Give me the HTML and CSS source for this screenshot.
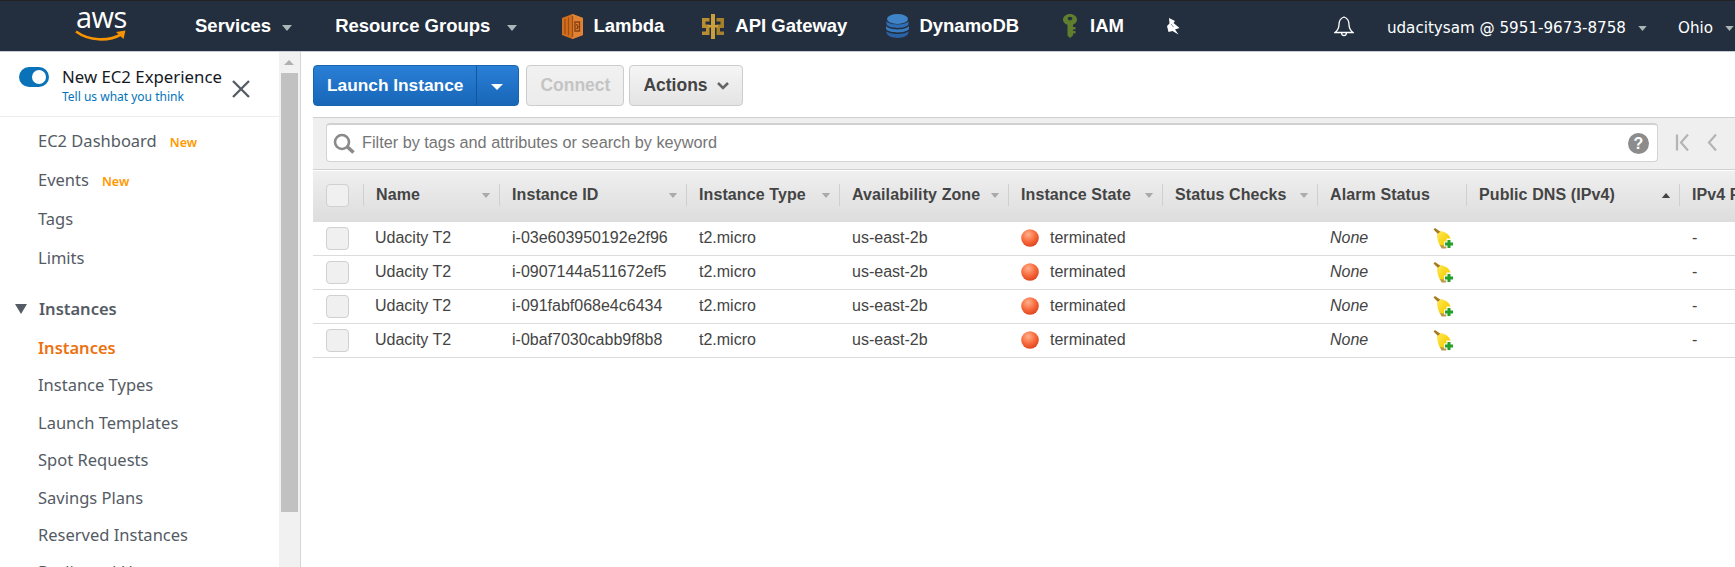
FILE: index.html
```html
<!DOCTYPE html>
<html lang="en">
<head>
    <meta charset="UTF-8">
    <title>Instances | EC2 Management Console</title>
    <link rel="stylesheet" href="styles.css">
</head>
<body>
    <svg class="defs" width="0" height="0">
        <defs>
            <radialGradient id="redBall" cx="0.4" cy="0.3" r="0.75">
                <stop offset="0" stop-color="#ffb08c"/>
                <stop offset="0.55" stop-color="#f86a3c"/>
                <stop offset="1" stop-color="#d9401c"/>
            </radialGradient>
            <linearGradient id="broomHead" x1="0" y1="0" x2="1" y2="1">
                <stop offset="0" stop-color="#ffe95a"/>
                <stop offset="0.6" stop-color="#f7d20f"/>
                <stop offset="1" stop-color="#e0ac08"/>
            </linearGradient>
            <symbol id="ball" viewBox="0 0 18 18">
                <circle cx="9" cy="9" r="8.800" fill="url(#redBall)"/>
            </symbol>
            <symbol id="broom" viewBox="0 0 21 21">
                <path d="M0.500 1.500 L2 0 L8.500 4.500 L6 7 Z" fill="#a8791a"/>
                <path d="M4 6.500 L8 3 C13 4 17 7 18 12 L15 19 L10 20 L7 18 C5 14 4 10 4 6.500 Z" fill="url(#broomHead)"/>
                <path d="M7 17 L8.500 20.500 L13 20.500 L14 18 Z" fill="#b79a4c"/>
                <path d="M13.500 10.500 h5 v3 h2.500 v5 h-2.500 v2.500 h-5 v-2.500 h-2.500 v-5 h2.500 Z" fill="#ffffff"/>
                <path d="M14.500 12 h3 v2.500 h2.500 v3 h-2.500 v2.500 h-3 v-2.500 h-2.500 v-3 h2.500 Z" fill="#22a028"/>
            </symbol>
            <symbol id="caret" viewBox="0 0 10 6">
                <path d="M0 0 H10 L5 6 Z" fill="currentColor"/>
            </symbol>
        </defs>
    </svg>

    <header class="topbar">
        <div class="logo">
            <span class="logo-text">aws</span>
            <svg class="logo-smile" viewBox="0 0 51 12" width="51" height="12">
                <path d="M1 1.500 C14 11 33 12 47 4" fill="none" stroke="#f79400" stroke-width="2.600"/>
                <path d="M41 2 L50.500 0.500 L48.500 9 Z" fill="#f79400"/>
            </svg>
        </div>
        <nav class="nav-main">
            <a class="nav-menu nav-services">Services<svg class="nav-caret"><use href="#caret"/></svg></a>
            <a class="nav-menu nav-groups">Resource Groups<svg class="nav-caret"><use href="#caret"/></svg></a>
            <a class="nav-link nav-lambda">
                <svg width="21" height="25" viewBox="0 0 21 25">
                    <path d="M10.500 0 L21 4 V21 L10.500 25 L0 21 V4 Z" fill="#d0701f"/>
                    <path d="M10.500 0 L21 4 V21 L10.500 25 Z" fill="#e08336"/>
                    <path d="M3 5 V20 M6.500 3.500 V21.500 M10.500 2 V23" stroke="#a04c12" stroke-width="1.300"/>
                    <path d="M13 8 H17.500 V17 H13 Z M14.500 10 L16 13 L14.500 15" fill="none" stroke="#8a3f0e" stroke-width="1.400"/>
                </svg>
                <span>Lambda</span>
            </a>
            <a class="nav-link nav-api">
                <svg width="22" height="25" viewBox="0 0 22 25">
                    <path d="M0 4 H7.500 V7.500 H3.500 V10.500 H7.500 V21 H0 V17.500 H4 V14 H0 Z" fill="#b98d32"/>
                    <path d="M22 4 H14.500 V7.500 H18.500 V10.500 H14.500 V21 H22 V17.500 H18 V14 H22 Z" fill="#a87f2a"/>
                    <path d="M9 0 H13 V25 H9 Z M6 11 H16 V13.500 H6 Z" fill="#c9a03c"/>
                </svg>
                <span>API Gateway</span>
            </a>
            <a class="nav-link nav-dynamo">
                <svg width="23" height="24" viewBox="0 0 23 24">
                    <ellipse cx="11.500" cy="5" rx="10.500" ry="5" fill="#3f84c8"/>
                    <path d="M0.500 7 C3 11.500 20 11.500 22.500 7 V10.500 C20 15 3 15 0.500 10.500 Z" fill="#2f6db4"/>
                    <path d="M0 12 C3 16.500 20 16.500 23 12 V15 C20 19.500 3 19.500 0 15 Z" fill="#3a7cc2"/>
                    <path d="M0.500 17 C3 21 20 21 22.500 17 V19 C20 25.500 3 25.500 0.500 19 Z" fill="#2a62a6"/>
                </svg>
                <span>DynamoDB</span>
            </a>
            <a class="nav-link nav-iam">
                <svg width="14" height="24" viewBox="0 0 14 24">
                    <path fill-rule="evenodd" d="M7 0 C10.800 0 14 2.500 14 5.800 C14 8 12.500 9.800 10 10.800 V13 H12.500 V15.500 H10 V17 H12.500 V19.500 H10 V21.500 L7 24 L4.500 21.500 V10.800 C1.800 10 0 8 0 5.800 C0 2.500 3.200 0 7 0 Z M7 2.800 C5.800 2.800 4.700 3.500 4.700 4.600 C4.700 5.700 5.800 6.400 7 6.400 C8.200 6.400 9.300 5.700 9.300 4.600 C9.300 3.500 8.200 2.800 7 2.800 Z" fill="#5f7f2e"/>
                </svg>
                <span>IAM</span>
            </a>
            <a class="nav-pin">
                <svg width="15" height="17" viewBox="0 0 15 17">
                    <path d="M4 0 L10 3 L8.500 5 L14.500 10 L10 11.500 L13.500 16.500 L7.500 13 L3.500 14 L2 8 L4.500 5.500 Z" fill="#ffffff"/>
                    <path d="M6 6 L8.500 9" stroke="#8d949c" stroke-width="1"/>
                </svg>
            </a>
        </nav>
        <div class="nav-right">
            <svg class="bell" width="20" height="21" viewBox="0 0 20 21">
                <path d="M10 1 C6 2.500 5 5.500 5 8.500 C5 12.500 3.500 14.500 1 16.500 H19 C16.500 14.500 15 12.500 15 8.500 C15 5.500 14 2.500 10 1 Z M7.500 17 C8 20.500 12 20.500 12.500 17" fill="none" stroke="#ffffff" stroke-width="1.300"/>
            </svg>
            <span class="account">udacitysam @ 5951-9673-8758<svg class="acct-caret"><use href="#caret"/></svg></span>
            <span class="account region">Ohio<svg class="acct-caret"><use href="#caret"/></svg></span>
        </div>
    </header>

    <div class="page">
        <aside class="sidebar">
            <div class="side-content">
                <div class="experience">
                    <span class="toggle"><span class="toggle-knob"></span></span>
                    <div class="exp-text">
                        <div class="exp-title">New EC2 Experience</div>
                        <a class="exp-link">Tell us what you think</a>
                    </div>
                    <svg class="exp-close" width="18" height="18" viewBox="0 0 18 18">
                        <path d="M1 1 L17 17 M17 1 L1 17" stroke="#545b64" stroke-width="2.300"/>
                    </svg>
                </div>
                <ul class="side-list">
                    <li>EC2 Dashboard<span class="badge">New</span></li>
                    <li>Events<span class="badge">New</span></li>
                    <li>Tags</li>
                    <li>Limits</li>
                </ul>
                <div class="side-group"><span class="group-arrow"></span>Instances</div>
                <ul class="side-list side-list-tight">
                    <li class="active">Instances</li>
                    <li>Instance Types</li>
                    <li>Launch Templates</li>
                    <li>Spot Requests</li>
                    <li>Savings Plans</li>
                    <li>Reserved Instances</li>
                    <li>Dedicated Hosts</li>
                </ul>
            </div>
            <div class="scrollbar">
                <div class="scroll-up"></div>
                <div class="scroll-thumb"></div>
            </div>
        </aside>

        <main class="main">
            <div class="toolbar">
                <div class="btn-launch">
                    <span class="launch-label">Launch Instance</span>
                    <span class="launch-drop"></span>
                </div>
                <button class="btn btn-disabled">Connect</button>
                <button class="btn btn-actions">Actions<svg width="12" height="8" viewBox="0 0 12 8"><path d="M1 1 L6 6 L11 1" fill="none" stroke="#666" stroke-width="2.600"/></svg></button>
            </div>

            <div class="filter-band">
                <div class="search">
                    <svg class="search-icon" width="22" height="21" viewBox="0 0 22 21">
                        <circle cx="9" cy="9" r="7" fill="none" stroke="#8a8a8a" stroke-width="2.600"/>
                        <path d="M14.500 14 L20.500 19.500" stroke="#8a8a8a" stroke-width="3.600"/>
                    </svg>
                    <span class="search-text">Filter by tags and attributes or search by keyword</span>
                    <span class="help">?</span>
                </div>
                <div class="pager">
                    <svg width="15" height="17" viewBox="0 0 15 17"><path d="M2 0.500 V16.500 M13 0.500 L6 8.500 L13 16.500" fill="none" stroke="#b4b4b4" stroke-width="2.200"/></svg>
                    <svg width="10" height="17" viewBox="0 0 10 17"><path d="M9 0.500 L2 8.500 L9 16.500" fill="none" stroke="#b4b4b4" stroke-width="2.200"/></svg>
                </div>
            </div>

            <table class="grid">
                <colgroup>
                    <col class="c-check"><col class="c-name"><col class="c-id"><col class="c-type"><col class="c-zone">
                    <col class="c-state"><col class="c-checks"><col class="c-alarm"><col class="c-dns"><col class="c-ip">
                </colgroup>
                <thead>
                    <tr>
                        <th><span class="check"></span></th>
                        <th><div class="th-in">Name<svg class="sort"><use href="#caret"/></svg></div></th>
                        <th><div class="th-in">Instance ID<svg class="sort"><use href="#caret"/></svg></div></th>
                        <th><div class="th-in">Instance Type<svg class="sort"><use href="#caret"/></svg></div></th>
                        <th><div class="th-in">Availability Zone<svg class="sort"><use href="#caret"/></svg></div></th>
                        <th><div class="th-in">Instance State<svg class="sort"><use href="#caret"/></svg></div></th>
                        <th><div class="th-in">Status Checks<svg class="sort"><use href="#caret"/></svg></div></th>
                        <th><div class="th-in">Alarm Status</div></th>
                        <th><div class="th-in">Public DNS (IPv4)<svg class="sort sort-up"><use href="#caret"/></svg></div></th>
                        <th><div class="th-in">IPv4 Public IP</div></th>
                    </tr>
                </thead>
                <tbody>
                    <tr>
                        <td><span class="check"></span></td><td>Udacity T2</td><td>i-03e603950192e2f96</td><td>t2.micro</td><td>us-east-2b</td>
                        <td><div class="state"><svg width="18" height="18"><use href="#ball"/></svg>terminated</div></td><td></td>
                        <td><div class="alarm"><em>None</em><svg width="21" height="21"><use href="#broom"/></svg></div></td><td></td><td>-</td>
                    </tr>
                    <tr>
                        <td><span class="check"></span></td><td>Udacity T2</td><td>i-0907144a511672ef5</td><td>t2.micro</td><td>us-east-2b</td>
                        <td><div class="state"><svg width="18" height="18"><use href="#ball"/></svg>terminated</div></td><td></td>
                        <td><div class="alarm"><em>None</em><svg width="21" height="21"><use href="#broom"/></svg></div></td><td></td><td>-</td>
                    </tr>
                    <tr>
                        <td><span class="check"></span></td><td>Udacity T2</td><td>i-091fabf068e4c6434</td><td>t2.micro</td><td>us-east-2b</td>
                        <td><div class="state"><svg width="18" height="18"><use href="#ball"/></svg>terminated</div></td><td></td>
                        <td><div class="alarm"><em>None</em><svg width="21" height="21"><use href="#broom"/></svg></div></td><td></td><td>-</td>
                    </tr>
                    <tr>
                        <td><span class="check"></span></td><td>Udacity T2</td><td>i-0baf7030cabb9f8b8</td><td>t2.micro</td><td>us-east-2b</td>
                        <td><div class="state"><svg width="18" height="18"><use href="#ball"/></svg>terminated</div></td><td></td>
                        <td><div class="alarm"><em>None</em><svg width="21" height="21"><use href="#broom"/></svg></div></td><td></td><td>-</td>
                    </tr>
                </tbody>
            </table>
        </main>
    </div>
</body>
</html>
```

FILE: styles.css
```css
/* Page */
html, body {
    margin: 0;
    padding: 0;
    height: 100%;
    overflow: hidden;
}
body {
    display: flex;
    flex-direction: column;
    font-family: "Liberation Sans", Arial, sans-serif;
    color: #444;
    background: #fff;
}
.defs {
    position: absolute;
}

/* Top bar */
.topbar {
    flex: none;
    height: 50px;
    display: flex;
    align-items: center;
    background: #232f3e;
    border-top: 1px solid #222;
    border-bottom: 1px solid #c6ccd2;
    color: #fff;
}
.logo {
    width: 195px;
    height: 50px;
    flex: none;
    padding-left: 76px;
    box-sizing: border-box;
    position: relative;
}
.logo-text {
    display: block;
    padding-top: 1px;
    font-family: "Open Sans", sans-serif;
    font-size: 29px;
    line-height: 30px;
    letter-spacing: -0.5px;
}
.logo-smile {
    position: absolute;
    left: 75px;
    top: 29px;
}
.nav-main {
    display: flex;
    align-items: center;
    font-size: 18.500px;
    font-weight: bold;
    height: 100%;
}
.nav-main a {
    display: flex;
    align-items: center;
}
.nav-caret {
    width: 10px;
    height: 6px;
    margin-top: 3px;
    color: #aab7b8;
    flex: none;
}
.nav-services .nav-caret { margin-left: 11px; }
.nav-services { margin-right: 43px; }
.nav-groups .nav-caret { margin-left: 17px; }
.nav-groups { margin-right: 45px; }
.nav-lambda { margin-right: 38px; }
.nav-lambda svg { margin-right: 10px; }
.nav-api { margin-right: 39px; }
.nav-api svg { margin-right: 11px; }
.nav-dynamo { margin-right: 44px; }
.nav-dynamo svg { margin-right: 10px; }
.nav-iam { margin-right: 41px; }
.nav-iam svg { margin-right: 13px; }
.nav-right {
    margin-left: auto;
    padding-right: 1px;
    display: flex;
    align-items: center;
    font-family: "DejaVu Sans", sans-serif;
    font-size: 15.150px;
}
.bell {
    margin-right: 33px;
}
.account {
    display: flex;
    align-items: center;
    white-space: nowrap;
    margin-top: 4px;
}
.region {
    margin-left: 31px;
}
.acct-caret {
    width: 9px;
    height: 5px;
    margin-left: 12px;
    color: #aab7b8;
    flex: none;
}

/* Layout */
.page {
    flex: 1;
    display: flex;
    min-height: 0;
}
.sidebar {
    flex: none;
    width: 300px;
    display: flex;
    border-right: 1px solid #d5d5d5;
    overflow: hidden;
}
.side-content {
    flex: 1;
    min-width: 0;
    font-family: "Noto Sans", "Open Sans", sans-serif;
    color: #545b64;
}
.scrollbar {
    flex: none;
    width: 21px;
    background: #f1f1f1;
    box-sizing: border-box;
    padding: 0 2px;
}
.scroll-up {
    height: 21px;
    position: relative;
}
.scroll-up::after {
    content: "";
    position: absolute;
    left: 3px;
    top: 8px;
    border-left: 5px solid transparent;
    border-right: 5px solid transparent;
    border-bottom: 5px solid #b0b0b0;
}
.scroll-thumb {
    height: 439px;
    background: #c1c1c1;
}

/* New EC2 Experience box */
.experience {
    height: 65px;
    display: flex;
    padding-top: 14px;
    padding-left: 19px;
    box-sizing: border-box;
    border-bottom: 1px solid #eaeded;
}
.toggle {
    width: 30px;
    height: 20px;
    border-radius: 10px;
    background: #0a72b8;
    flex: none;
    position: relative;
    margin-top: 1px;
}
.toggle-knob {
    position: absolute;
    right: 3px;
    top: 3px;
    width: 14px;
    height: 14px;
    background: #fff;
    border-radius: 50%;
}
.exp-text {
    margin-left: 13px;
    flex: none;
}
.exp-title {
    font-size: 16.800px;
    line-height: 22px;
    color: #16191f;
}
.exp-link {
    display: block;
    font-size: 12px;
    line-height: 18px;
    color: #0073bb;
}
.exp-close {
    margin-left: 10px;
    margin-top: 14px;
    flex: none;
}

/* Navigation list */
.side-list {
    list-style: none;
    margin: 0;
    padding: 4px 0 0 38px;
    font-size: 16.500px;
}
.side-list li {
    height: 39px;
    line-height: 39px;
    white-space: nowrap;
}
.side-list-tight {
    padding-top: 1.500px;
}
.side-list-tight li {
    height: 37.400px;
    line-height: 37.400px;
}
.badge {
    font-size: 12.500px;
    font-weight: 600;
    color: #ff9900;
    margin-left: 13px;
}
.side-group {
    margin-top: 12.500px;
    height: 38px;
    font-size: 16.500px;
    font-weight: 600;
    display: flex;
    align-items: center;
    padding-left: 15px;
}
.group-arrow {
    width: 0;
    height: 0;
    border-left: 6px solid transparent;
    border-right: 6px solid transparent;
    border-top: 10px solid #545b64;
    margin-right: 12px;
}
.side-list .active {
    color: #ec7211;
    font-weight: 600;
}

/* Toolbar */
.main {
    flex: 1;
    min-width: 0;
    overflow: hidden;
    padding-left: 12px;
}
.toolbar {
    display: flex;
    padding-top: 13px;
}
.btn-launch {
    display: flex;
    height: 41px;
    box-sizing: border-box;
    border: 1px solid #1a63ae;
    border-radius: 4px;
    background: linear-gradient(#2a7fd6, #1766b8);
    color: #fff;
    font-weight: bold;
    font-size: 17.300px;
}
.launch-label {
    padding: 0 13px;
    line-height: 39px;
    border-right: 1px solid #1455a0;
    white-space: nowrap;
}
.launch-drop {
    width: 41px;
    position: relative;
}
.launch-drop::after {
    content: "";
    position: absolute;
    left: 14px;
    top: 18px;
    border-left: 6px solid transparent;
    border-right: 6px solid transparent;
    border-top: 6px solid #fff;
}
.btn {
    height: 41px;
    padding: 0 13px;
    border: 1px solid #ccc;
    border-radius: 4px;
    font-family: inherit;
    font-weight: bold;
    font-size: 17.500px;
    background: linear-gradient(#f5f5f5, #e4e4e4);
}
.btn-disabled {
    margin-left: 7px;
    color: #c4c4c4;
    background: linear-gradient(#f1f1f1, #ececec);
}
.btn-actions {
    margin-left: 5px;
    color: #444;
    display: flex;
    align-items: center;
}
.btn-actions svg {
    margin-left: 9px;
}

/* Search band */
.filter-band {
    margin-top: 11px;
    height: 53px;
    box-sizing: border-box;
    display: flex;
    background: #efefef;
    border-top: 1px solid #d0d0d0;
    border-bottom: 1px solid #d0d0d0;
    padding: 5px 0 0 13px;
}
.search {
    width: 1332px;
    height: 39px;
    flex: none;
    box-sizing: border-box;
    background: #fff;
    border: 1px solid #d4d4d4;
    border-top: 2px solid #d0d0d0;
    border-radius: 4px;
    display: flex;
    align-items: center;
    padding: 0 8px 0 6px;
}
.search-icon {
    flex: none;
}
.search-text {
    margin-left: 7px;
    margin-bottom: 2px;
    color: #757575;
    font-size: 16.250px;
    flex: 1;
}
.help {
    width: 21px;
    height: 21px;
    border-radius: 50%;
    background: #8c8c8c;
    color: #fff;
    font-size: 16px;
    font-weight: bold;
    text-align: center;
    line-height: 21px;
}
.pager {
    height: 39px;
    display: flex;
    align-items: center;
    gap: 17px;
    margin-left: 17px;
    flex: none;
}

/* Instances grid */
.grid {
    border-collapse: separate;
    border-spacing: 0;
    table-layout: fixed;
    width: 1564px;
    margin-top: 1px;
    font-size: 16px;
}
.c-check { width: 50px; }
.c-name { width: 136px; }
.c-id { width: 187px; }
.c-type { width: 153px; }
.c-zone { width: 169px; }
.c-state { width: 154px; }
.c-checks { width: 155px; }
.c-alarm { width: 149px; }
.c-dns { width: 213px; }
.c-ip { width: 198px; }
.grid th {
    height: 48px;
    padding: 0 0 3px;
    text-align: left;
    background: linear-gradient(#efefef, #dddddd);
    font-weight: bold;
    white-space: nowrap;
}
.th-in {
    display: flex;
    align-items: center;
    height: 22px;
    padding: 0 8px 0 12px;
    border-left: 1px solid #cfcfcf;
    letter-spacing: 0.1px;
}
.sort {
    width: 10px;
    height: 5px;
    margin-left: auto;
    color: #aaa;
    flex: none;
}
.sort-up {
    color: #444;
    transform: rotate(180deg);
}
.grid td {
    height: 32px;
    padding: 0 0 1px 13px;
    color: #444;
    border-bottom: 1px solid #dcdcdc;
    white-space: nowrap;
    overflow: hidden;
}
.grid td:nth-child(2) {
    padding-left: 12px;
}
.grid th:first-child, .grid td:first-child {
    padding-left: 13px;
}
.check {
    display: block;
    width: 23px;
    height: 23px;
    box-sizing: border-box;
    border: 1px solid #d0d0d0;
    border-radius: 4px;
    background: #f0f0f0;
}
.state {
    display: flex;
    align-items: center;
    gap: 11px;
}
.state svg, .alarm svg {
    flex: none;
}
.alarm {
    display: flex;
    align-items: center;
}
.alarm em {
    width: 103px;
}
```
